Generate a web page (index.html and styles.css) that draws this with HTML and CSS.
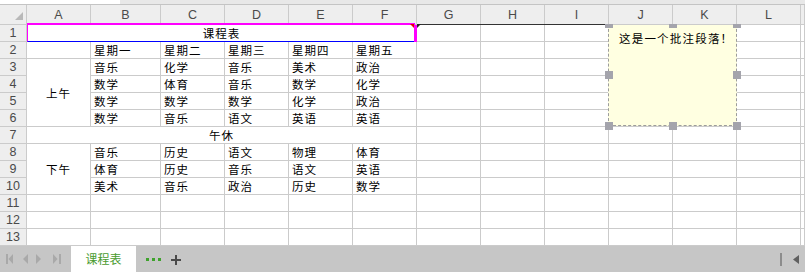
FILE: index.html
```html
<!DOCTYPE html>
<html lang="zh-CN">

<head>
  <meta charset="UTF-8">
  <meta name="viewport" content="width=device-width, initial-scale=1.0">
  <title>课程表</title>
  <link rel="stylesheet" href="styles.css">
</head>

<body>
  <div class="topbar"></div>

  <div class="sheet">
    <!-- column headers -->
    <div class="corner"></div>
    <div class="ch">A</div><div class="ch">B</div><div class="ch">C</div><div class="ch">D</div>
    <div class="ch">E</div><div class="ch">F</div><div class="ch">G</div><div class="ch">H</div>
    <div class="ch">I</div><div class="ch">J</div><div class="ch">K</div><div class="ch">L</div>
    <div class="ch"></div>

    <!-- row 1 -->
    <div class="rh">1</div>
    <div class="merge title">课程表<i class="flag"></i></div>
    <div></div><div></div><div></div><div></div><div></div><div></div><div></div>

    <!-- row 2 -->
    <div class="rh">2</div>
    <div></div>
    <div>星期一</div><div>星期二</div><div>星期三</div><div>星期四</div><div>星期五</div>
    <div></div><div></div><div></div><div></div><div></div><div></div><div></div>

    <!-- row 3 -->
    <div class="rh">3</div>
    <div class="half am">上午</div>
    <div>音乐</div><div>化学</div><div>音乐</div><div>美术</div><div>政治</div>
    <div></div><div></div><div></div><div></div><div></div><div></div><div></div>

    <!-- row 4 -->
    <div class="rh">4</div>
    <div>数学</div><div>体育</div><div>音乐</div><div>数学</div><div>化学</div>
    <div></div><div></div><div></div><div></div><div></div><div></div><div></div>

    <!-- row 5 -->
    <div class="rh">5</div>
    <div>数学</div><div>数学</div><div>数学</div><div>化学</div><div>政治</div>
    <div></div><div></div><div></div><div></div><div></div><div></div><div></div>

    <!-- row 6 -->
    <div class="rh">6</div>
    <div>数学</div><div>音乐</div><div>语文</div><div>英语</div><div>英语</div>
    <div></div><div></div><div></div><div></div><div></div><div></div><div></div>

    <!-- row 7 -->
    <div class="rh">7</div>
    <div class="merge">午休</div>
    <div></div><div></div><div></div><div></div><div></div><div></div><div></div>

    <!-- row 8 -->
    <div class="rh">8</div>
    <div class="half pm">下午</div>
    <div>音乐</div><div>历史</div><div>语文</div><div>物理</div><div>体育</div>
    <div></div><div></div><div></div><div></div><div></div><div></div><div></div>

    <!-- row 9 -->
    <div class="rh">9</div>
    <div>体育</div><div>历史</div><div>音乐</div><div>语文</div><div>英语</div>
    <div></div><div></div><div></div><div></div><div></div><div></div><div></div>

    <!-- row 10 -->
    <div class="rh">10</div>
    <div>美术</div><div>音乐</div><div>政治</div><div>历史</div><div>数学</div>
    <div></div><div></div><div></div><div></div><div></div><div></div><div></div>

    <!-- rows 11 - 13 -->
    <div class="rh">11</div>
    <div></div><div></div><div></div><div></div><div></div><div></div><div></div>
    <div></div><div></div><div></div><div></div><div></div><div></div>
    <div class="rh">12</div>
    <div></div><div></div><div></div><div></div><div></div><div></div><div></div>
    <div></div><div></div><div></div><div></div><div></div><div></div>
    <div class="rh">13</div>
    <div></div><div></div><div></div><div></div><div></div><div></div><div></div>
    <div></div><div></div><div></div><div></div><div></div><div></div>

    <!-- comment -->
    <span class="connector"></span>
    <span class="arrow"></span>
    <p class="note">这是一个批注段落！</p>
    <span class="handle top" style="left:605px"></span>
    <span class="handle top" style="left:669px"></span>
    <span class="handle top" style="left:733px"></span>
    <span class="handle mid" style="left:605px"></span>
    <span class="handle mid" style="left:733px"></span>
    <span class="handle bottom" style="left:605px"></span>
    <span class="handle bottom" style="left:669px"></span>
    <span class="handle bottom" style="left:733px"></span>
  </div>

  <div class="tabbar">
    <svg class="nav" width="71" height="26" viewBox="0 0 71 26">
      <rect x="6" y="8" width="2" height="10" fill="#a9a9a9" />
      <polygon points="13,8 8.5,13 13,18" fill="#a9a9a9" />
      <polygon points="28,8 23,13 28,18" fill="#a9a9a9" />
      <polygon points="36,8 41,13 36,18" fill="#a9a9a9" />
      <polygon points="53,8 57.5,13 53,18" fill="#a9a9a9" />
      <rect x="59" y="8" width="2" height="10" fill="#a9a9a9" />
    </svg>
    <div class="tab">课程表</div>
    <svg class="tools" width="50" height="26" viewBox="0 0 50 26">
      <rect x="10" y="12" width="3" height="3" fill="#3ea22c" />
      <rect x="16" y="12" width="3" height="3" fill="#3ea22c" />
      <rect x="22" y="12" width="3" height="3" fill="#3ea22c" />
      <path d="M35 14H45M40 9V19" stroke="#4a4a4a" stroke-width="2" />
    </svg>
    <svg class="scroll" width="30" height="26" viewBox="0 0 30 26">
      <rect x="5" y="7" width="2" height="13" fill="#8c8c8c" />
      <polygon points="24,9 18,13.5 24,18" fill="#606060" />
    </svg>
  </div>
</body>

</html>
```

FILE: styles.css
```css
body {
  margin: 0;
  width: 805px;
  height: 272px;
  overflow: hidden;
  background: #fff;
  font-family: "Noto Sans CJK SC", "Liberation Sans", sans-serif;
}

.topbar {
  height: 4px;
  border-bottom: 1px solid #c4c4c4;
  background: linear-gradient(to right, #fff 120px, #e8e8e8 120px);
}

.sheet {
  position: relative;
  display: grid;
  grid-template-columns: 27px 64px 70px repeat(10, 64px) 4px;
  grid-template-rows: 20px repeat(13, 17px);
}

.sheet > div {
  box-sizing: border-box;
  display: flex;
  align-items: center;
  padding-left: 3px;
  border-right: 1px solid #cbcbcb;
  border-bottom: 1px solid #cbcbcb;
  font-size: 11.5px;
  letter-spacing: 1px;
  line-height: 16px;
  color: #000;
  white-space: nowrap;
}

.sheet > .ch,
.sheet > .rh,
.sheet > .corner {
  justify-content: center;
  padding: 0;
  background: #eeeeee;
  font-family: "Liberation Sans", sans-serif;
  font-size: 12.5px;
  letter-spacing: 0;
  color: #4a4a4a;
}

.sheet > .ch,
.sheet > .corner {
  position: relative;
  z-index: 2;
}

.corner::after {
  content: "";
  position: absolute;
  right: 3px;
  bottom: 4px;
  border-left: 8px solid transparent;
  border-bottom: 8px solid #b9b9b9;
}

.sheet > .merge {
  grid-column: span 6;
  justify-content: center;
  padding: 0;
}

.sheet > .half {
  justify-content: center;
  padding: 0;
}

.am {
  grid-row: span 4;
}

.pm {
  grid-row: span 3;
}

/* selected merged title A1:F1 */
.sheet > .title {
  position: relative;
  z-index: 3;
}

.title::before {
  content: "";
  position: absolute;
  left: 0;
  right: 1px;
  top: -2px;
  bottom: -1px;
  border-top: 2px solid #ff00ff;
  border-left: 1px solid #ff00ff;
  border-bottom: 1px solid #0000ff;
}

.title::after {
  content: "";
  position: absolute;
  top: 0;
  bottom: -1px;
  right: -1px;
  width: 3px;
  background: #ff00ff;
}

.flag {
  position: absolute;
  top: -1px;
  right: 2px;
  border-left: 4px solid transparent;
  border-top: 4px solid #e00000;
}

/* comment */
.connector {
  position: absolute;
  left: 420px;
  top: 19px;
  width: 188px;
  height: 1px;
  background: #333;
  z-index: 4;
}

.arrow {
  position: absolute;
  left: 417px;
  top: 19px;
  border-top: 4px solid #222;
  border-right: 4px solid transparent;
  z-index: 4;
}

.note {
  position: absolute;
  left: 608px;
  top: 19px;
  width: 129px;
  height: 102px;
  box-sizing: border-box;
  margin: 0;
  padding: 5px 0 0 10px;
  background: #ffffe1;
  border: 1px dashed #9c9c9c;
  font-size: 11.5px;
  letter-spacing: 1.2px;
  line-height: 16px;
  white-space: nowrap;
  z-index: 1;
}

.handle {
  position: absolute;
  width: 8px;
  height: 8px;
  background: #a4a4ac;
  z-index: 4;
}

.handle.top {
  top: 19px;
  height: 4px;
}

.handle.mid {
  top: 66px;
}

.handle.bottom {
  top: 117px;
}

/* sheet tabs */
.tabbar {
  display: flex;
  height: 26px;
  background: #c6c6c6;
}

.tab {
  width: 65px;
  background: #fff;
  color: #4a9b2f;
  font-size: 12px;
  line-height: 26px;
  text-align: center;
}

.scroll {
  margin-left: auto;
}
```
